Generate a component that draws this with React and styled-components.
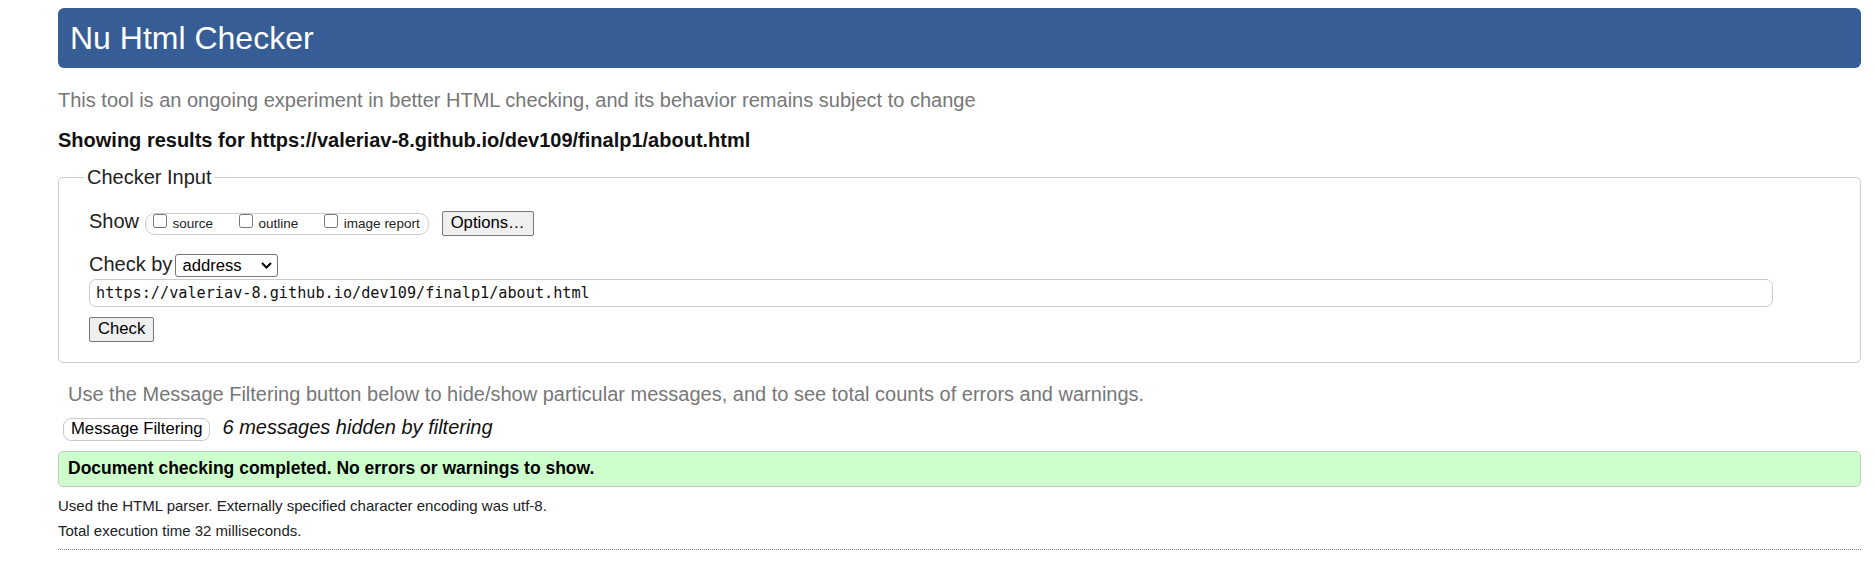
import React from 'react';
import styled, { createGlobalStyle } from 'styled-components';

const GlobalStyle = createGlobalStyle`
    html, body {
        margin: 0;
        padding: 0;
        background: #fff;
    }
    body {
        font-family: "Liberation Sans", Arial, sans-serif;
        color: #222;
    }
`;

const Page = styled.div`
    padding: 8px 14px 0 58px;
`;

const Banner = styled.h1`
    margin: 0;
    height: 60px;
    display: flex;
    align-items: center;
    padding: 0 12px;
    background: #365d95;
    border-radius: 6px;
    color: #fff;
    font-size: 32px;
    line-height: 36px;
    font-weight: normal;
`;

const Note = styled.p`
    margin: ${({ $mt }) => $mt}px 0 0;
    padding-left: ${({ $indent }) => $indent || 0}px;
    font-size: 20px;
    line-height: 23px;
    color: #777;
`;

const Results = styled.h2`
    margin: 17px 0 0;
    font-size: 20px;
    line-height: 23px;
    font-weight: bold;
    color: #111;
`;

const Fieldset = styled.fieldset`
    margin: 14px 0 0;
    padding: 21px 87px 20.4px 30px;
    border: 1px solid #ccc;
    border-radius: 5px;
    min-width: 0;
`;

const Legend = styled.legend`
    margin-left: -5px;
    padding: 0 3px;
    font-size: 20px;
    line-height: 23px;
    color: #222;
`;

const Row = styled.div`
    display: flex;
    align-items: baseline;
    margin-top: ${({ $mt }) => $mt || 0}px;
    padding-left: ${({ $pl }) => $pl || 0}px;
`;

const FieldLabel = styled.span`
    font-size: 20px;
    line-height: 23px;
    color: #222;
`;

const ToggleGroup = styled.span`
    display: inline-flex;
    align-items: baseline;
    height: 22px;
    box-sizing: border-box;
    margin-left: 5.5px;
    padding: 0 8px 0 7.5px;
    border: 1px solid #ccc;
    border-radius: 10px;
`;

const Toggle = styled.label`
    display: inline-flex;
    align-items: baseline;
    margin-right: ${({ $last }) => ($last ? 0 : 26)}px;
    font-size: 13.5px;
    line-height: 20px;
    color: #222;
`;

const Box = styled.span`
    align-self: flex-start;
    width: 14px;
    height: 14px;
    box-sizing: border-box;
    margin-right: 5.5px;
    border: 1px solid #767676;
    border-radius: 2.5px;
    background: #fff;
`;

const Button = styled.button`
    height: 25px;
    box-sizing: border-box;
    margin-left: ${({ $ml }) => $ml || 0}px;
    padding: 1px 8px 3px;
    border: 1px solid #767676;
    border-radius: 2px;
    background: #efefef;
    color: #000;
    font-family: inherit;
    font-size: 16.67px;
    line-height: 19px;
`;

const SelectBox = styled.span`
    display: inline-flex;
    align-items: center;
    justify-content: space-between;
    width: 102.4px;
    height: 23px;
    box-sizing: border-box;
    margin-left: 3px;
    padding: 0 5px 0 6px;
    border: 1px solid #767676;
    border-radius: 3px;
    background: #fff;
    color: #000;
    font-size: 16.67px;
    line-height: 21px;
`;

const UrlField = styled.input`
    display: block;
    width: 100%;
    height: 28px;
    box-sizing: border-box;
    margin: 2.3px 0 0;
    padding: 0 6px;
    border: 1px solid #ccc;
    border-radius: 7px;
    background: #fff;
    color: #111;
    font-family: "DejaVu Sans Mono", "Liberation Mono", monospace;
    font-size: 15.2px;
    outline: none;
`;

const FilterButton = styled.button`
    height: 23px;
    box-sizing: border-box;
    padding: 1px 7px 2px;
    border: 1px solid #c8c8c8;
    border-radius: 8px;
    background: #fff;
    color: #000;
    font-family: inherit;
    font-size: 16.67px;
    line-height: 18px;
`;

const Hidden = styled.span`
    margin-left: 12px;
    font-size: 20px;
    line-height: 23px;
    font-style: italic;
    color: #111;
`;

const Success = styled.div`
    margin-top: 10px;
    padding: 5.4px 9px 6.6px;
    border: 1px solid #c5c5c5;
    border-radius: 5px;
    background: #ccffcc;
    color: #000;
    font-size: 17.5px;
    line-height: 22px;
    font-weight: bold;
`;

const Meta = styled.p`
    margin: ${({ $mt }) => $mt}px 0 0;
    font-size: 15px;
    line-height: 17px;
    color: #222;
`;

const Rule = styled.div`
    margin-top: 9.7px;
    border-top: 1px dotted #888;
`;

const Chevron = () => (
    <svg width="11" height="7" viewBox="0 0 11 7">
        <polyline points="1,1 5.5,5.5 10,1" fill="none" stroke="#000" strokeWidth="2" />
    </svg>
);

const url = 'https://valeriav-8.github.io/dev109/finalp1/about.html';

const App = () => {
    return (
        <Page>
            <GlobalStyle />
            <Banner>Nu Html Checker</Banner>
            <Note $mt={20.6}>
                This tool is an ongoing experiment in better HTML checking, and its behavior remains subject to change
            </Note>
            <Results>Showing results for {url}</Results>

            <Fieldset>
                <Legend>Checker Input</Legend>
                <Row>
                    <FieldLabel>Show</FieldLabel>
                    <ToggleGroup>
                        <Toggle><Box />source</Toggle>
                        <Toggle><Box />outline</Toggle>
                        <Toggle $last><Box />image report</Toggle>
                    </ToggleGroup>
                    <Button $ml={13}>Options…</Button>
                </Row>
                <Row $mt={17}>
                    <FieldLabel>Check by</FieldLabel>
                    <SelectBox>
                        <span>address</span>
                        <Chevron />
                    </SelectBox>
                </Row>
                <UrlField readOnly value={url} />
                <Row $mt={9.7}>
                    <Button>Check</Button>
                </Row>
            </Fieldset>

            <Note $mt={20.1} $indent={10}>
                Use the Message Filtering button below to hide/show particular messages, and to see total counts of errors and warnings.
            </Note>
            <Row $mt={10} $pl={5}>
                <FilterButton>Message Filtering</FilterButton>
                <Hidden>6 messages hidden by filtering</Hidden>
            </Row>

            <Success>Document checking completed. No errors or warnings to show.</Success>

            <Meta $mt={10.1}>Used the HTML parser. Externally specified character encoding was utf-8.</Meta>
            <Meta $mt={8}>Total execution time 32 milliseconds.</Meta>
            <Rule />
        </Page>
    );
};

export default App;
